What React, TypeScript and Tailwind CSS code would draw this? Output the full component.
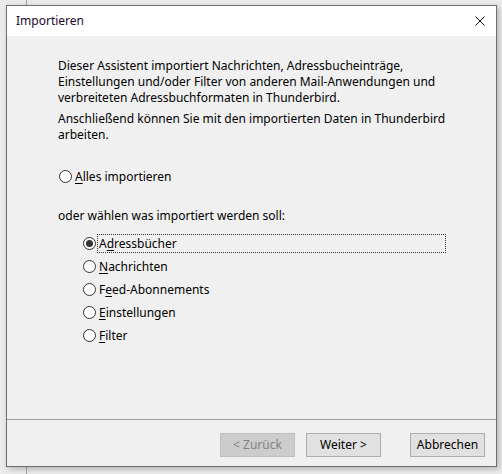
import React from 'react';

const font = { fontFamily: '"Noto Sans", "Open Sans", Arial, sans-serif' };

function Radio({ checked }: { checked?: boolean }) {
  return (
    <span className="w-[13px] h-[13px] rounded-full border border-[#333333] bg-white flex items-center justify-center shrink-0">
      {checked && <span className="w-[7px] h-[7px] rounded-full bg-[#333333]" />}
    </span>
  );
}

function Option({ label, accessKey, checked, focused }: { label: string; accessKey: number; checked?: boolean; focused?: boolean }) {
  const before = label.slice(0, accessKey);
  const key = label.charAt(accessKey);
  const after = label.slice(accessKey + 1);
  return (
    <div className="flex items-center h-[23px]">
      <Radio checked={checked} />
      <span
        className={
          focused
            ? 'ml-[1px] flex-1 h-[19px] pl-[1px] flex items-center border border-dotted border-[#333333]'
            : 'ml-[3px] flex items-center'
        }
      >
        {before}
        <span className="underline underline-offset-2">{key}</span>
        {after}
      </span>
    </div>
  );
}

function Button({ children, disabled }: { children: React.ReactNode; disabled?: boolean }) {
  return (
    <button
      className={
        disabled
          ? 'w-[75px] h-[24px] border border-[#bfbfbf] bg-[#cccccc] text-[#838383] text-[12px]'
          : 'w-[75px] h-[24px] border border-[#adadad] bg-[#e1e1e1] text-black text-[12px]'
      }
    >
      {children}
    </button>
  );
}

export default function App() {
  const items = [
    { label: 'Adressbücher', key: 1, checked: true, focused: true },
    { label: 'Nachrichten', key: 0 },
    { label: 'Feed-Abonnements', key: 1 },
    { label: 'Einstellungen', key: 0 },
    { label: 'Filter', key: 0 },
  ];

  return (
    <div className="relative w-[502px] h-[474px] bg-[#ececec] pt-[5px] pl-[6px] overflow-hidden" style={font}>
      <div className="absolute left-[26px] top-0 w-px h-full bg-[#9aa6b8]" />
      <div className="relative w-[491px] h-[462px] border border-[#6e6e6e] bg-[#f0f0f0] flex flex-col shadow-[2px_2px_6px_rgba(0,0,0,0.25)] text-[12px] text-black">
        <div className="h-[30px] bg-white flex items-center justify-between pl-[9px] pr-[9px]">
          <span className="text-[12px] text-[#1a0a30]">Importieren</span>
          <svg width="12" height="12" viewBox="0 0 12 12" className="mr-[1px]">
            <path d="M1.5 1.5 L10.5 10.5 M10.5 1.5 L1.5 10.5" stroke="#111" strokeWidth="1" />
          </svg>
        </div>
        <div className="flex-1 pl-[51px] pr-[16px] pt-[22px] leading-[16px]">
          <p>
            Dieser Assistent importiert Nachrichten, Adressbucheinträge,
            <br />
            Einstellungen und/oder Filter von anderen Mail-Anwendungen und
            <br />
            verbreiteten Adressbuchformaten in Thunderbird.
          </p>
          <p className="mt-[5px]">
            Anschließend können Sie mit den importierten Daten in Thunderbird
            <br />
            arbeiten.
          </p>
          <div className="mt-[25px] flex items-center h-[17px] pl-[1px]">
            <Radio />
            <span className="ml-[3px]">
              <span className="underline underline-offset-2">A</span>lles importieren
            </span>
          </div>
          <p className="mt-[23px]">oder wählen was importiert werden soll:</p>
          <div className="mt-[8px] pl-[25px] w-[388px]">
            {items.map((it) => (
              <Option key={it.label} label={it.label} accessKey={it.key} checked={it.checked} focused={it.focused} />
            ))}
          </div>
        </div>
        <div className="h-px bg-[#a0a0a0]" />
        <div className="h-[46px] flex items-start justify-end pt-[13px] pr-[11px]">
          <Button disabled>&lt; Zurück</Button>
          <div className="w-[11px]" />
          <Button>Weiter &gt;</Button>
          <div className="w-[29px]" />
          <Button>Abbrechen</Button>
        </div>
      </div>
    </div>
  );
}
